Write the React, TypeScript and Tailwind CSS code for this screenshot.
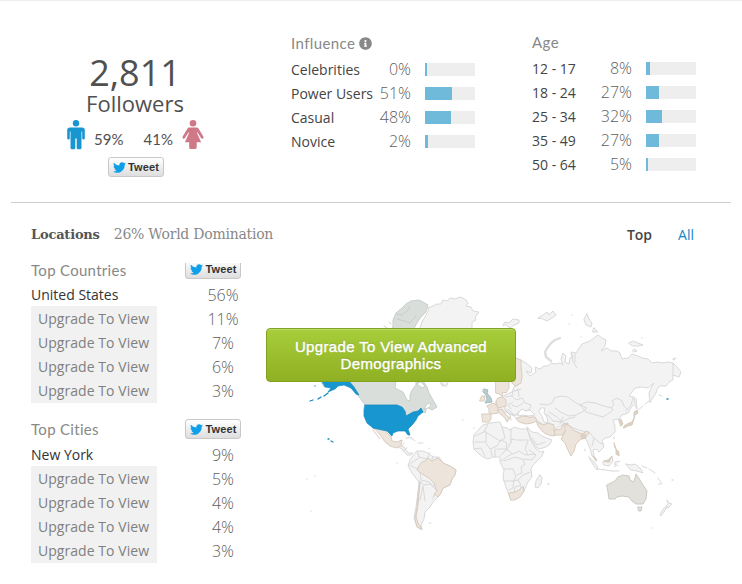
import { FaInfoCircle, FaTwitter } from "react-icons/fa";

type Stat = { label: string; value: string; bar: number };

const influence: Stat[] = [
    { label: "Celebrities", value: "0%", bar: 2 },
    { label: "Power Users", value: "51%", bar: 27 },
    { label: "Casual", value: "48%", bar: 26 },
    { label: "Novice", value: "2%", bar: 3 },
];

const ages: Stat[] = [
    { label: "12 - 17", value: "8%", bar: 4 },
    { label: "18 - 24", value: "27%", bar: 13 },
    { label: "25 - 34", value: "32%", bar: 16 },
    { label: "35 - 49", value: "27%", bar: 13 },
    { label: "50 - 64", value: "5%", bar: 2 },
];

const TweetButton = () => {
    return (
        <button className="flex h-5 w-14 shrink-0 items-center justify-center gap-[2px] rounded-[3px] border border-[#c8c8c8] bg-gradient-to-b from-white to-[#dedede] pl-px font-['Liberation_Sans',sans-serif] text-[11px] leading-none font-bold tracking-[0.15px] text-[#333]">
            <FaTwitter size={13} color="#0f9fe8" />
            Tweet
        </button>
    );
};

const StatRows = ({ stats }: { stats: Stat[] }) => {
    return (
        <div>
            {stats.map((s) => (
                <div key={s.label} className="flex h-6 items-center justify-between">
                    <span className="text-[14px] whitespace-nowrap text-[#444]">{s.label}</span>
                    <span className="ml-auto text-[16px] font-light text-[#606060]">{s.value}</span>
                    <div className="ml-[14px] h-[13px] w-[50px] shrink-0 bg-[#eee]">
                        <div className="h-full bg-[#6fb9db]" style={{ width: s.bar }} />
                    </div>
                </div>
            ))}
        </div>
    );
};

const PlaceTable = ({ first, values }: { first: string; values: string[] }) => {
    return (
        <div className="grid grid-cols-[126px_1fr]">
            <div className="text-[14px]">
                <div className="h-[23px] leading-6 text-[#333]">{first}</div>
                <div className="bg-[#f1f1f1] pt-px pl-[7px] text-[#808080]">
                    {values.slice(1).map((v, i) => (
                        <div key={i} className="h-6 leading-6 tracking-[0.05px]">Upgrade To View</div>
                    ))}
                </div>
            </div>
            <div className="pl-[22px] text-center text-[16px] text-[#606060]">
                {values.map((v, i) => (
                    <div key={i} className="h-6 w-[88px] leading-6 font-light">{v}</div>
                ))}
            </div>
        </div>
    );
};

const Man = () => (
    <svg width="18" height="30" viewBox="0 0 18 30" fill="#1896cf">
        <circle cx="9" cy="3.3" r="3.2" />
        <path d="M3 7.5h12q2.8 0 2.8 2.6v8.2q0 1.3-1.3 1.3t-1.3-1.3v-6.8h-.7v16.3q0 1.5-1.8 1.5h-1.8q-1.2 0-1.2-1.5V18.6h-1.4v9.2q0 1.5-1.2 1.5H5.3q-1.8 0-1.8-1.5V11.5h-.7v6.8q0 1.3-1.3 1.3T.2 18.300v-8.200Q.2 7.500 3 7.500Z" />
    </svg>
);

const Woman = () => (
    <svg width="22" height="30" viewBox="0 0 22 30" fill="#cf7888">
        <circle cx="11" cy="3.3" r="3.3" />
        <path d="M7.2 7.600h7.600q1 0 1.700 1l4.800 8q.7 1.200-.3 1.900t-1.900-.4l-3.700-5.800-.5.4 4.200 9.500h-4.400v5.400q0 1.500-1.800 1.500H9q-1.800 0-1.800-1.500v-5.400H2.900l4.200-9.500-.5-.4-3.700 5.800q-.9 1.100-1.900.4t-.3-1.900l4.800-8q.7-1 1.700-1Z" />
    </svg>
);

const WorldMap = () => {
    return (
        <svg width="400" height="250" viewBox="300 290 400 250" strokeLinejoin="round" strokeLinecap="round">
            {/* unranked countries */}
            <g fill="#f3f3f3" stroke="#d9d9d9" strokeWidth="1">
                <path d="M420 328L422 322 425 317 427 313 429 310 428 308 433 306 437 304 441 304 443 300 447 301 450 298 455 299 460 297 463 298 466 300 468 303 466 306 471 307 473 311 479 312 477 315 475 317 476 320 472 322 472 327 465 350 454 364 447 385 442 386 436 370 430 340Z" />
                <path d="M521 360L526 363 532 368 531 373 526 371 530 376 536 372 535 367 540 369 544 366 548 366 551 363 555 364 560 363 563 365 561 359 563 353 566 356 565 362 569 364 570 358 573 357 571 352 576 353 578 350 582 344 590 341 594 338 598 335 602 338 606 340 605 346 601 351 607 348 611 351 617 351 620 353 622 359 628 358 632 354 638 356 642 358 648 359 652 363 658 362 663 363 668 362 673 363 677 367 681 372 679 377 673 375 673 380 669 382 666 386 660 386 657 389 656 393 652 399 650 403 649 393 651 388 654 383 648 388 641 387 635 388 632 392 629 396 634 397 635 403 631 408 628 413 622 415 619 419 613 420 615 426 615 432 610 437 605 438 602 441 604 447 599 452 596 449 593 450 594 456 597 460 592 456 590 449 587 441 583 436 575 434 565 424 553 430 537 421 531 414 520 411 514 416 505 412 498 409 493 410 495 403 501 397 512 392 514 387 518 385Z" />
                <path d="M483 425L490 423 500 422 502 427 507 428 510 430 514 427 520 429 527 429 531 441 536 449 540 452 544 451 542 456 538 460 533 465 531 469 532 477 528 482 526 486 523 493 517 499 511 500 507 490 503 478 504 470 500 462 500 457 493 457 488 459 483 457 478 453 474 449 473 442 474 435Z" />
                <path d="M527 427L532 432 538 433 542 436 547 438 552 440 550 444 546 447 539 449 536 447 531 439Z" />
                <path d="M540 475L542 478 541 484 538 488 535 487 536 481Z" />
                <path d="M415 453L417 451 423 451 428 453 433 457 439 457 443 463 450 466 456 470 455 475 452 479 450 485 443 488 441 493 438 497 433 502 430 507 425 512 424 519 421 525 422 530 417 527 414 518 416 507 418 493 419 482 412 473 408 466 410 460Z" />
                <path d="M399 445L404 447 408 453 413 453 411 455 407 455 402 449 398 447Z" />
                <path d="M503 325L505 322 509 323 513 319 519 320 519 323 514 325 510 328 506 325ZM538 318L543 315 547 312 549 315 553 311 556 315 552 318 547 321 543 319ZM587 314L589 319 592 323 591 327 586 325 584 320ZM594 328L598 332 593 332ZM629 343L633 341 638 343 643 345 638 346 633 346ZM673 359L676 358 674 360ZM633 350L635 349 637 351 634 352Z" />
                <path d="M589 457L594 462 598 467 597 470 592 463ZM598 469L605 470 612 471 619 471M603 462L608 460 612 456 613 461 609 466 604 465ZM615 467L615 462 620 461M615 464L618 466M626 464L631 465 635 464 640 468 643 473 637 471 631 470ZM642 466L647 468M649 469L655 473M658 478L662 484M667 500L669 503 672 504 668 508 666 506 668 504ZM667 507L664 512 661 516 660 514 664 508Z" />
                <path d="M406 438L411 437 415 441M418 443L423 443M429 448v1M429 523h2M636 398L637 409 635 405M441 383L445 386 447 386M637 411L643 406M645 404L649 401M659 395l3 1M614 437v2M585 449v2" />
            </g>

            {/* borders */}
            <g fill="none" stroke="#d9d9d9" strokeWidth="1">
                <path d="M540 404L548 405 553 402 554 398 561 396 568 397 573 401 580 405 587 408 582 412 576 415 569 416 562 413 555 408M580 405L587 402 595 403 604 406 611 408 614 405 612 401 617 398 622 401 624 406 628 410M580 405L586 412 596 415 603 417 609 413 613 410 611 407M575 417L567 419 562 422 553 421 548 415 541 414M565 423L573 428 582 431 589 432M589 432L594 438 592 446M594 438L600 443 604 444M549 412L557 417 563 423M563 417L560 424M673 363V375M633 398L631 405 626 411" />
                <path d="M505 397L512 396 516 400 522 398 525 403 531 405 529 410 523 411 517 415 511 414 505 409 504 404M512 396L513 391 518 390M515 391L521 389M512 405L517 407 523 403M508 409L514 415 517 420M505 410L510 415 511 420M513 402L508 405 511 409M518 389L519 396" />
                <path d="M475 436L484 432 488 424M484 431L500 441 505 438 502 427M475 442H486V432M486 443L490 449 497 446 501 440M511 429V443M516 440H528M510 440L515 439M501 440L507 443 506 450 501 455M497 449H506L513 454 519 451 525 455 535 454M474 449L481 448 485 456M491 450L492 456M495 449L495 457M504 461L510 459 515 457 522 459 525 464 521 467 522 473 517 475M504 469H513L516 477 513 481H504M513 481L518 480 523 475 530 472M518 480L521 485 515 487 514 494M523 459L532 460 536 455 529 450M509 490L513 488 514 480M501 461L508 456 512 454M511 442L507 450M528 441L525 449 528 455M520 486L523 491" />
                <path d="M417 451L419 457 427 459 430 453M419 458L411 463M418 469L409 465M433 456L432 460M437 458L438 461M420 472L421 480 429 482 435 487M419 481L424 485 430 484 436 490M434 495L433 499M420 500L423 486 425 501M532 438L537 445 545 442M404 443L401 447M407 448L403 451" />
                <path d="M560 338L555 340 551 343 548 347 545 352 546 357 551 361" stroke="#dedede" strokeWidth="2.400" />
                <path d="M571 353L573 361 577 368M575 354L575 362" />
            </g>

            {/* seas inside the landmass */}
            <g fill="#fff" stroke="#d9d9d9" strokeWidth="1">
                <path d="M519 412L522 409 526 411 530 410 535 415 529 416 523 415 518 416Z" />
                <path d="M541 408L545 408 544 413 547 417 548 423 544 422 542 416 539 412Z" />
            </g>

            {/* low share */}
            <g fill="#ede5dc" stroke="#d8ccbf" strokeWidth="1">
                <path d="M516 358L521 360 521 367 522 376 521 383 515 386 512 383Z" />
                <path d="M496 380H509L509 388 506 393 503 392 502 396 499 394 496 393Z" />
                <path d="M482 414L491 414 491 419 489 422 483 422Z" />
                <path d="M487 406L493 403 498 406 498 413 493 414 489 413 489 409Z" />
                <path d="M498 398L503 397 506 400 506 406 498 408 496 402Z" />
                <path d="M498 410L502 409 505 414 510 418 507 422 505 418 499 413ZM482 396L485 396 484 401 480 401Z" />
                <path d="M517 418L523 416 529 417 535 417 537 421 532 423 526 424 519 422Z" />
                <path d="M537 422L543 425 548 423 554 425 554 431 556 435 552 436 546 434 542 431 538 426Z" />
                <path d="M555 430L561 429 563 424 568 423 567 429 562 435 555 435Z" />
                <path d="M565 424L570 426 573 430 582 434 587 431 589 433 585 438 581 439 576 444 574 451 571 456 568 450 565 443 561 439 565 432Z" />
                <path d="M581 435L585 434 586 438 582 439Z" fill="#ddd1c4" />
                <path d="M624 428L628 426 632 425 634 419 635 415 638 413 637 410 634 412 634 418 632 422 627 424 624 426ZM619 420L621 419 623 424 621 426Z" fill="#ddd1c4" />
                <path d="M614 443L615 448 619 452 619 456 616 454 616 449ZM593 456L596 459 596 461ZM604 461L609 460 612 456 609 462Z" fill="#ddd1c4" />
                <path d="M509 493L515 492 519 490 523 486 524 491 520 497 514 500 511 500Z" />
                <path d="M373 428L385 430 388 434 391 436 392 441 397 442 402 440 401 445 397 448 390 446 385 442 381 436 377 431Z" />
                <path d="M373 430L376 434 380 439" fill="none" />
                <path d="M422 462L425 461 428 458 432 461 438 458 443 463 450 466 456 470 455 475 452 479 450 485 443 488 441 493 438 497 434 494 437 491 434 483 429 478 422 474 417 470 419 466Z" />
                <path d="M420 482L419 493 418 505 416 517 418 523 422 529 417 527 415 519 417 507 418 493Z" />
            </g>

            {/* Canada */}
            <g fill="#d9dedb" stroke="#c8cfcb" strokeWidth="1">
                <path d="M391 335L393 326 393 320 396 313 402 308 406 304 411 301 419 300 423 302 428 305 426 312 421 317 418 321 412 332Z" />
                <path d="M397 314L402 315 407 311 410 306M397 319L404 321 410 323 416 316M384 326L387 328M389 322L391 324" fill="none" />
                <path d="M346 370H421L423 381 427 387 429 393 433 400 437 407 432 410 427 407 425 413 420 411 411 415 406 416 403 410 397 405H365L360 398 352 388Z" />
                <path d="M396 380L395 388 403 392 407 400 410 401 410 395 412 390 416 385 416 379Z" fill="#fff" />
                <path d="M421 382L425 386 422 388 417 384ZM424 409L427 404 431 403 430 407Z" fill="#fff" />
            </g>

            <path d="M484 389L488 390 487 393 491 398 492 402 485 403 487 399 486 395 483 392Z" fill="#b9cdd1" stroke="#a5bdc2" />
            <g fill="#e3e1db" stroke="#cbc9c1" strokeWidth="1">
                <path d="M607 485L615 481 618 477 623 475 629 476 630 480 634 482 636 474 640 480 643 485 647 491 646 499 643 504 636 504 632 501 629 497 622 496 617 497 615 499 609 499 608 492Z" />
                <path d="M638 507L642 507 641 511 639 511Z" />
            </g>

            {/* United States */}
            <g fill="#1896cf" stroke="#118bc2" strokeWidth=".7">
                <path d="M365 405H397L402 407 405 411 406 416 413 412 418 411 421 408 423 412 418 416 416 420 413 424 408 429 410 435 408 435 405 431 398 431 393 433 392 436 387 431 382 430 373 428 367 423 364 416 364 410Z" />
                <path d="M321 380H348L354 387 359 395 356 394 351 388 344 385 338 386 335 389 328 392 331 388 325 387Z" />
                <path d="M328 393L324 396M321 397L318 399M313 400L310 401M315 386V386M328 439H329M331 441L333 442M667 399H668" fill="none" strokeWidth="1.300" />
            </g>
            <g stroke="#dcdcdc" strokeWidth="1.500">
                <path d="M307 479h0M315 476h0M311 511h0M397 463h0M463 420h0M474 428h0M569 324h0M572 315h0M581 337h0M642 338h0M672 480h1M659 484h1M652 528h0M548 484h1" />
            </g>
        </svg>
    );
};

const App = () => {
    return (
        <div className="h-[584px] w-[742px] overflow-hidden border-t border-[#eee] bg-white font-['Open_Sans',sans-serif]">
            <section className="mx-[11px] flex h-[202px] border-b border-[#ccc]">
                <div className="flex w-[248px] flex-col items-center pt-[50px] text-[#505050]">
                    <div className="text-[36px] leading-[44px]">2,811</div>
                    <div className="text-[22px] leading-[17px]">Followers</div>
                    <div className="mt-2 flex h-[30px] items-center pl-px">
                        <Man />
                        <span className="mt-[9px] ml-[9px] font-['Lato',sans-serif] text-[15px]">59%</span>
                        <span className="mt-[9px] ml-[20px] font-['Lato',sans-serif] text-[15px]">41%</span>
                        <span className="ml-[9px]"><Woman /></span>
                    </div>
                    <div className="mt-[7px] pl-[1px]"><TweetButton /></div>
                </div>

                <div className="ml-8 w-[184px] pt-[30px]">
                    <h3 className="mb-[2px] flex h-6 items-center gap-1 font-['Lato',sans-serif] text-[15px] tracking-[0.4px] text-[#888]">
                        Influence <FaInfoCircle size={13} />
                    </h3>
                    <StatRows stats={influence} />
                </div>

                <div className="ml-[57px] w-[164px] pt-[29px]">
                    <h3 className="mb-[2px] flex h-6 items-center font-['Lato',sans-serif] text-[15px] tracking-[0.4px] text-[#888]">Age</h3>
                    <StatRows stats={ages} />
                </div>
            </section>

            <section className="pl-[31px]">
                <div className="flex h-[60px] items-center pt-[3px] pr-[48px] text-[14px]">
                    <h2 className="font-['DejaVu_Serif',serif] text-[13px] font-bold tracking-[-0.2px] text-[#555]">Locations</h2>
                    <span className="ml-[14px] flex-1 font-['DejaVu_Serif',serif] text-[14px] tracking-[-0.25px] text-[#888]">26% World Domination</span>
                    <span className="font-semibold text-[#444]">Top</span>
                    <span className="ml-[26px] text-[#1487c4]">All</span>
                </div>

                <div className="flex">
                    <div className="w-[210px]">
                        <div className="flex h-[20px] justify-between">
                            <h3 className="font-['Lato',sans-serif] text-[15px] leading-[14px] tracking-[0.3px] text-[#888]">Top Countries</h3>
                            <div className="h-4 overflow-hidden"><div className="-mt-1"><TweetButton /></div></div>
                        </div>
                        <PlaceTable first="United States" values={["56%", "11%", "7%", "6%", "3%"]} />
                        <div className="mt-4 mb-1 flex h-5 items-center justify-between">
                            <h3 className="font-['Lato',sans-serif] text-[15px] tracking-[0.3px] text-[#888]">Top Cities</h3>
                            <TweetButton />
                        </div>
                        <PlaceTable first="New York" values={["9%", "5%", "4%", "4%", "3%"]} />
                    </div>

                    <div className="relative mt-[27px] ml-[59px]">
                        <WorldMap />
                        <button className="absolute top-[38px] -left-[34px] h-[54px] w-[250px] rounded-[4px] border border-[#82a31f] bg-gradient-to-b from-[#a8ce3b] to-[#8fb022] px-5 font-['Liberation_Sans',sans-serif] text-[15px] leading-[17px] tracking-[0.35px] text-white [-webkit-text-stroke:0.4px_white] [text-shadow:0_-1px_1px_rgba(0,0,0,.2)] shadow-[inset_0_1px_0_rgba(255,255,255,.25)]">
                            Upgrade To View Advanced Demographics
                        </button>
                    </div>
                </div>
            </section>
        </div>
    );
};

export default App;
